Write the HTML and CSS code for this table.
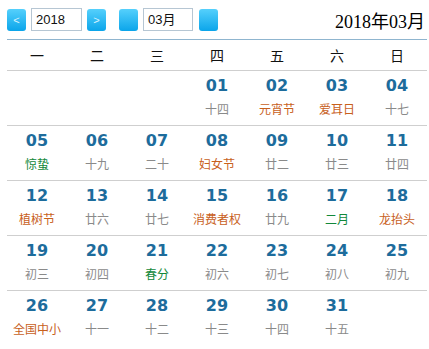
FILE: index.html
```html
<!DOCTYPE html>
<html lang="zh">
<head>
<meta charset="utf-8">
<link rel="stylesheet" href="styles.css">
</head>
<body>
<div class="cal">
  <div class="toolbar">
    <span class="btn">&lt;</span>
    <span class="field year">2018</span>
    <span class="btn">&gt;</span>
    <span class="btn gap"></span>
    <span class="field month">03月</span>
    <span class="btn"></span>
    <span class="title">2018年03月</span>
  </div>
  <div class="grid head">
    <div>一</div><div>二</div><div>三</div><div>四</div><div>五</div><div>六</div><div>日</div>
  </div>
  <div class="grid week">
    <div class="cell"></div><div class="cell"></div><div class="cell"></div>
    <div class="cell"><b>01</b><i>十四</i></div>
    <div class="cell"><b>02</b><i class="fest">元宵节</i></div>
    <div class="cell"><b>03</b><i class="fest">爱耳日</i></div>
    <div class="cell"><b>04</b><i>十七</i></div>
  </div>
  <div class="grid week">
    <div class="cell"><b>05</b><i class="term">惊蛰</i></div>
    <div class="cell"><b>06</b><i>十九</i></div>
    <div class="cell"><b>07</b><i>二十</i></div>
    <div class="cell"><b>08</b><i class="fest">妇女节</i></div>
    <div class="cell"><b>09</b><i>廿二</i></div>
    <div class="cell"><b>10</b><i>廿三</i></div>
    <div class="cell"><b>11</b><i>廿四</i></div>
  </div>
  <div class="grid week">
    <div class="cell"><b>12</b><i class="fest">植树节</i></div>
    <div class="cell"><b>13</b><i>廿六</i></div>
    <div class="cell"><b>14</b><i>廿七</i></div>
    <div class="cell"><b>15</b><i class="fest">消费者权</i></div>
    <div class="cell"><b>16</b><i>廿九</i></div>
    <div class="cell"><b>17</b><i class="term">二月</i></div>
    <div class="cell"><b>18</b><i class="fest">龙抬头</i></div>
  </div>
  <div class="grid week">
    <div class="cell"><b>19</b><i>初三</i></div>
    <div class="cell"><b>20</b><i>初四</i></div>
    <div class="cell"><b>21</b><i class="term">春分</i></div>
    <div class="cell"><b>22</b><i>初六</i></div>
    <div class="cell"><b>23</b><i>初七</i></div>
    <div class="cell"><b>24</b><i>初八</i></div>
    <div class="cell"><b>25</b><i>初九</i></div>
  </div>
  <div class="grid week">
    <div class="cell"><b>26</b><i class="fest">全国中小</i></div>
    <div class="cell"><b>27</b><i>十一</i></div>
    <div class="cell"><b>28</b><i>十二</i></div>
    <div class="cell"><b>29</b><i>十三</i></div>
    <div class="cell"><b>30</b><i>十四</i></div>
    <div class="cell"><b>31</b><i>十五</i></div>
    <div class="cell"></div>
  </div>
</div>
</body>
</html>
```
FILE: styles.css
```css
html, body {
  margin: 0;
  padding: 0;
  background: #fff;
}
.cal {
  width: 420px;
  margin-left: 7px;
  font-family: "Noto Sans CJK SC", sans-serif;
}
.toolbar {
  display: flex;
  align-items: center;
  height: 39px;
}
.btn {
  width: 19px;
  height: 22px;
  border-radius: 3px;
  background: linear-gradient(#55d0fc, #0ba5ea);
  color: #d8f3ff;
  font-family: "Liberation Sans", sans-serif;
  font-size: 11px;
  line-height: 22px;
  text-align: center;
}
.btn.gap { margin-left: 13px; }
.field {
  height: 21px;
  border: 1px solid #b6c6d3;
  font-family: "Liberation Sans", "Noto Sans CJK SC", sans-serif;
  font-size: 13px;
  line-height: 21px;
  color: #111;
  padding-left: 4px;
  margin: 0 5px;
}
.field.year { width: 45px; }
.field.month { width: 44px; margin-right: 6px; }
.title {
  margin-left: auto;
  font-family: "Liberation Serif", "Noto Sans CJK SC", serif;
  font-size: 18px;
  color: #000;
  padding-right: 2px;
}
.grid {
  display: grid;
  grid-template-columns: repeat(7, 60px);
}
.head {
  border-top: 1px solid #8fb5cf;
  height: 30px;
  align-items: center;
  text-align: center;
  font-size: 14px;
  color: #111;
}
.week {
  border-top: 1px solid #cfcfcf;
  height: 54px;
}
.cell {
  display: flex;
  flex-direction: column;
  align-items: center;
  padding-top: 5px;
}
.cell b {
  font-family: "DejaVu Sans", sans-serif;
  font-weight: bold;
  font-size: 16px;
  line-height: 20px;
  color: #1d6c9c;
}
.cell i {
  font-style: normal;
  font-size: 12px;
  line-height: 16px;
  margin-top: 5px;
  color: #8a8a8a;
}
.cell i.fest { color: #c8601c; }
.cell i.term { color: #12883a; }
```
